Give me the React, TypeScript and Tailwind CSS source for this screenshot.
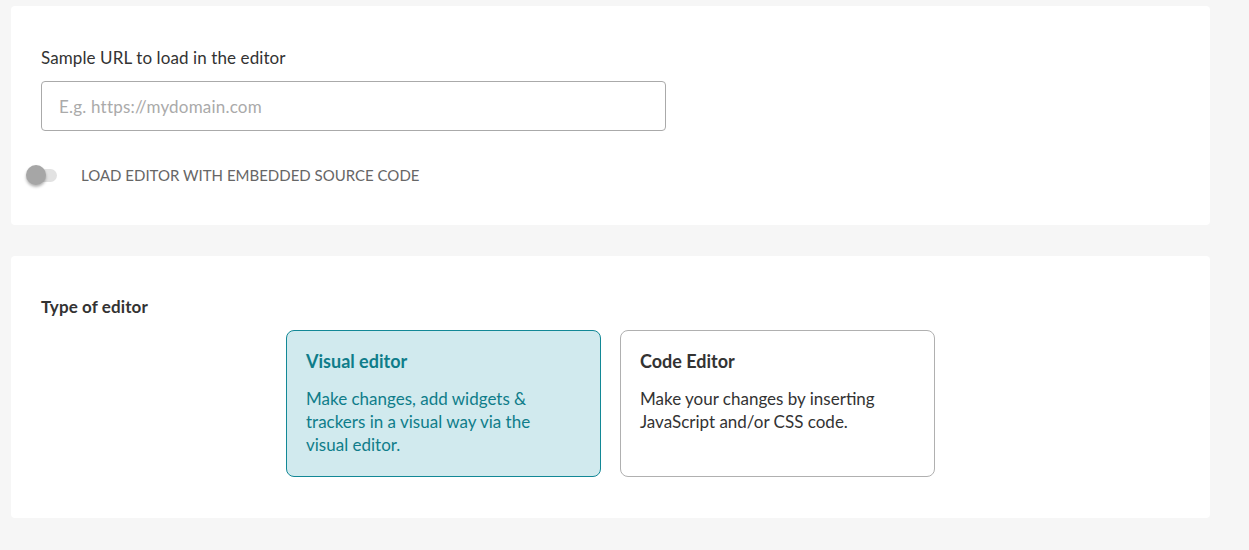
export default function App() {
  return (
    <div className="min-h-[550px] w-full bg-[#f6f6f6] pt-[6px] pl-[11px] pr-[39px] pb-8 font-['Lato',sans-serif]">
      {/* URL card */}
      <div className="rounded-[4px] bg-white px-[30px] pt-[40px] pb-[40px]">
        <label className="block text-[17px] leading-[24px] tracking-[0.1px] text-[#333]">Sample URL to load in the editor</label>
        <input
          type="text"
          placeholder="E.g. https://mydomain.com"
          className="mt-[11px] h-[50px] w-[625px] rounded-[4px] border border-[#aaa] px-[17px] text-[17px] tracking-[0.2px] text-[#333] outline-none placeholder:text-[#aaa]"
        />
        <div className="mt-[34px] flex h-[20px] items-center -ml-[15px]">
          <div className="relative h-[20px] w-[32px]">
            <div className="absolute left-[4px] top-[4px] h-[13px] w-[27px] rounded-full bg-[#e2e2e2]" />
            <div className="absolute left-0 top-0 h-[20px] w-[20px] rounded-full bg-[#a6a6a6] shadow-[0_2px_3px_rgba(0,0,0,0.3)]" />
          </div>
          <span className="ml-[23px] text-[15px] uppercase text-[#666]">Load editor with embedded source code</span>
        </div>
      </div>

      {/* Editor type card */}
      <div className="mt-[31px] rounded-[4px] bg-white px-[30px] pt-[39px] pb-[41px]">
        <div className="text-[17px] font-bold leading-[24px] tracking-[0.1px] text-[#333]">Type of editor</div>
        <div className="mt-[11px] ml-[245px] flex gap-[19px]">
          <div className="h-[147px] w-[315px] rounded-[8px] border border-[#128896] bg-[#d1eaee] pl-[19px] pr-[30px] pt-[18px]">
            <div className="text-[18px] font-bold leading-[24px] text-[#0f7d8a]">Visual editor</div>
            <p className="mt-[14px] text-[17px] leading-[23px] text-[#0f7d8a]">
              Make changes, add widgets &amp; trackers in a visual way via the visual editor.
            </p>
          </div>
          <div className="h-[147px] w-[315px] rounded-[8px] border border-[#b0b0b0] bg-white pl-[19px] pr-[30px] pt-[18px]">
            <div className="text-[18px] font-bold leading-[24px] text-[#333]">Code Editor</div>
            <p className="mt-[14px] text-[17px] leading-[23px] text-[#333]">
              Make your changes by inserting JavaScript and/or CSS code.
            </p>
          </div>
        </div>
      </div>
    </div>
  );
}
